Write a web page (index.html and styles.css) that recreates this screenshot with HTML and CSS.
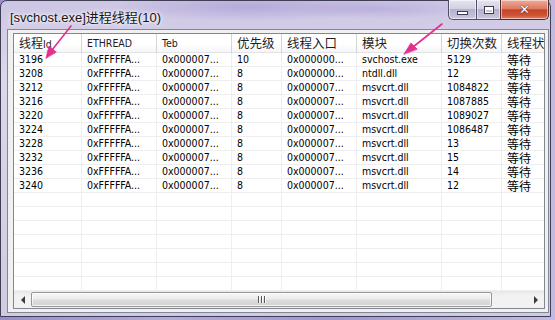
FILE: index.html
```html
<!DOCTYPE html>
<html lang="zh-CN">
<head>
    <meta charset="UTF-8">
    <title>[svchost.exe]进程线程(10)</title>
    <link rel="stylesheet" href="styles.css">
</head>
<body>
    <div class="window">
        <div class="titlebar">
            <div class="title">[svchost.exe]进程线程(10)</div>
            <div class="caption">
                <div class="cbtn min"><span class="glyph-min"></span></div>
                <div class="cbtn max"><span class="glyph-max"></span></div>
                <div class="cbtn close"><span class="glyph-close">✕</span></div>
            </div>
        </div>

        <div class="client">
            <div class="listview">
                <div class="header">
                    <div class="hcell"><span class="zh">线程</span>Id</div>
                    <div class="hcell">ETHREAD</div>
                    <div class="hcell">Teb</div>
                    <div class="hcell zh">优先级</div>
                    <div class="hcell zh">线程入口</div>
                    <div class="hcell zh">模块</div>
                    <div class="hcell zh">切换次数</div>
                    <div class="hcell zh">线程状态</div>
                </div>

                <div class="rows">
                    <div class="row"><span>3196</span><span>0xFFFFFA...</span><span>0x000007...</span><span>10</span><span>0x000000...</span><span>svchost.exe</span><span>5129</span><span class="zh">等待</span></div>
                    <div class="row"><span>3208</span><span>0xFFFFFA...</span><span>0x000007...</span><span>8</span><span>0x000000...</span><span>ntdll.dll</span><span>12</span><span class="zh">等待</span></div>
                    <div class="row"><span>3212</span><span>0xFFFFFA...</span><span>0x000007...</span><span>8</span><span>0x000007...</span><span>msvcrt.dll</span><span>1084822</span><span class="zh">等待</span></div>
                    <div class="row"><span>3216</span><span>0xFFFFFA...</span><span>0x000007...</span><span>8</span><span>0x000007...</span><span>msvcrt.dll</span><span>1087885</span><span class="zh">等待</span></div>
                    <div class="row"><span>3220</span><span>0xFFFFFA...</span><span>0x000007...</span><span>8</span><span>0x000007...</span><span>msvcrt.dll</span><span>1089027</span><span class="zh">等待</span></div>
                    <div class="row"><span>3224</span><span>0xFFFFFA...</span><span>0x000007...</span><span>8</span><span>0x000007...</span><span>msvcrt.dll</span><span>1086487</span><span class="zh">等待</span></div>
                    <div class="row"><span>3228</span><span>0xFFFFFA...</span><span>0x000007...</span><span>8</span><span>0x000007...</span><span>msvcrt.dll</span><span>13</span><span class="zh">等待</span></div>
                    <div class="row"><span>3232</span><span>0xFFFFFA...</span><span>0x000007...</span><span>8</span><span>0x000007...</span><span>msvcrt.dll</span><span>15</span><span class="zh">等待</span></div>
                    <div class="row"><span>3236</span><span>0xFFFFFA...</span><span>0x000007...</span><span>8</span><span>0x000007...</span><span>msvcrt.dll</span><span>14</span><span class="zh">等待</span></div>
                    <div class="row"><span>3240</span><span>0xFFFFFA...</span><span>0x000007...</span><span>8</span><span>0x000007...</span><span>msvcrt.dll</span><span>12</span><span class="zh">等待</span></div>
                    <!-- empty grid rows -->
                    <div class="row"><span></span><span></span><span></span><span></span><span></span><span></span><span></span><span></span></div>
                    <div class="row"><span></span><span></span><span></span><span></span><span></span><span></span><span></span><span></span></div>
                    <div class="row"><span></span><span></span><span></span><span></span><span></span><span></span><span></span><span></span></div>
                    <div class="row"><span></span><span></span><span></span><span></span><span></span><span></span><span></span><span></span></div>
                    <div class="row"><span></span><span></span><span></span><span></span><span></span><span></span><span></span><span></span></div>
                    <div class="row"><span></span><span></span><span></span><span></span><span></span><span></span><span></span><span></span></div>
                    <div class="row"><span></span><span></span><span></span><span></span><span></span><span></span><span></span><span></span></div>
                </div>

                <div class="hscroll">
                    <div class="sb-btn"><span class="arrow-left"></span></div>
                    <div class="sb-thumb"><span class="grip"></span><span class="grip"></span><span class="grip"></span></div>
                    <div class="sb-track"></div>
                    <div class="sb-btn"><span class="arrow-right"></span></div>
                </div>
            </div>
        </div>
    </div>

    <!-- annotation arrows drawn over the screenshot -->
    <svg class="annot" width="555" height="320" viewBox="0 0 555 320">
        <g stroke="#e2308e" stroke-width="1.6" fill="#e2308e" stroke-linecap="round">
            <line x1="71" y1="26" x2="52" y2="50"/>
            <polygon points="46,58 49,46 56,52" stroke-width="0.8"/>
            <line x1="442" y1="24" x2="413" y2="47"/>
            <polygon points="404,54 411,43 417,49" stroke-width="0.8"/>
        </g>
    </svg>
</body>
</html>
```

FILE: styles.css
```css
* {
    box-sizing: border-box;
}

body {
    margin: 0;
    width: 555px;
    height: 320px;
    overflow: hidden;
    position: relative;
    background: linear-gradient(90deg, #9b8dca 0%, #b6a9dc 30%, #a395d0 60%, #c4b9e2 100%);
    font-family: "DejaVu Sans Condensed", "Liberation Sans", "Noto Sans CJK SC", sans-serif;
}

.window {
    width: 551px;
    height: 317px;
    border: 1px solid #3f3f54;
    border-radius: 7px 7px 0 0;
    padding: 0 1px 3px 6px;
    display: flex;
    flex-direction: column;
    background:
        radial-gradient(ellipse 140px 14px at 250px 6px, rgba(150, 135, 205, 0.45), transparent),
        radial-gradient(ellipse 90px 10px at 380px 8px, rgba(160, 145, 210, 0.4), transparent),
        linear-gradient(180deg, #cdc6e4 0%, #dcd8ec 25%, #d6d2e6 60%, #cfcbe0 100%);
}

/* title bar */
.titlebar {
    height: 28px;
    flex: none;
    display: flex;
    justify-content: space-between;
    align-items: flex-start;
}

.title {
    padding: 6px 0 0 3px;
    font-family: "Liberation Sans", "Noto Sans CJK SC", sans-serif;
    font-size: 13px;
    color: #161616;
    text-shadow: 0 0 5px #fff, 0 0 3px #fff;
}

.caption {
    display: flex;
    margin-top: -1px;
}

.cbtn {
    height: 20px;
    border: 1px solid #4e4e66;
    border-top: none;
    display: flex;
    align-items: center;
    justify-content: center;
    background: linear-gradient(180deg, #e6e4f0 0%, #d2d0e2 45%, #b4b1ca 50%, #c2bfd8 85%, #d2d0e2 100%);
    box-shadow: inset 0 0 0 1px rgba(255, 255, 255, 0.5);
}

.min {
    width: 28px;
    border-right: none;
    border-radius: 0 0 0 5px;
}

.max {
    width: 24px;
    border-right: none;
}

.close {
    width: 49px;
    border-radius: 0 0 5px 0;
    border-color: #5a2a2a;
    background: linear-gradient(180deg, #eeaa98 0%, #dd7c62 45%, #c6452b 52%, #cc5234 80%, #e0856a 100%);
}

.glyph-min {
    width: 11px;
    height: 4px;
    margin-top: 7px;
    background: #fff;
    border: 1px solid #3c3c50;
}

.glyph-max {
    width: 10px;
    height: 8px;
    border: 1px solid #3c3c50;
    box-shadow: inset 0 0 0 1px #fff, inset 0 2px 0 1px #fff;
    background: #c8c6d8;
}

.glyph-close {
    color: #fff;
    font-family: "DejaVu Sans", sans-serif;
    font-size: 13px;
    font-weight: bold;
    line-height: 1;
    text-shadow: 0 0 1px #3a1a1a, 0 0 1px #3a1a1a;
}

/* client area */
.client {
    flex: 1;
    border: 1px solid #85859a;
    background: #f0f0f0;
    padding: 3px 3px 3px 5px;
}

.listview {
    height: 100%;
    border: 1px solid #828790;
    background: #fff;
    overflow: hidden;
    display: flex;
    flex-direction: column;
    font-size: 10.5px;
    color: #000;
}

.zh {
    font-family: "Noto Sans CJK SC", sans-serif;
    font-size: 12px;
}

.header,
.row {
    display: grid;
    grid-template-columns: 68px 75px 75px 50px 75px 85px 60px 70px;
    width: 558px;
}

.header {
    height: 19px;
    flex: none;
    background: linear-gradient(180deg, #ffffff 0%, #ffffff 55%, #f4f5f7 100%);
    border-bottom: 1px solid #e2e3e6;
}

.hcell {
    padding-left: 5px;
    border-right: 1px solid #d5d5d5;
    line-height: 18px;
    white-space: nowrap;
    color: #1e1e1e;
}

.hcell.zh {
    font-size: 12.5px;
}

.rows {
    flex: 1;
    overflow: hidden;
}

.row {
    height: 14px;
}

.row span {
    padding-left: 5px;
    border-right: 1px solid #eeeeee;
    border-bottom: 1px solid #eeeeee;
    line-height: 13px;
    white-space: nowrap;
}

/* horizontal scrollbar */
.hscroll {
    height: 17px;
    flex: none;
    display: flex;
    background: linear-gradient(180deg, #e8e8e8 0%, #f2f2f2 30%, #f2f2f2 100%);
}

.sb-btn {
    width: 17px;
    display: flex;
    align-items: center;
    justify-content: center;
}

.arrow-left {
    border-style: solid;
    border-width: 4px 4px 4px 0;
    border-color: transparent #3c3c3c transparent transparent;
}

.arrow-right {
    border-style: solid;
    border-width: 4px 0 4px 4px;
    border-color: transparent transparent transparent #3c3c3c;
}

.sb-thumb {
    width: 461px;
    margin: 1px 0;
    border: 1px solid #969696;
    border-radius: 2px;
    background: linear-gradient(180deg, #f6f6f6 0%, #ececec 45%, #dcdcdc 55%, #d4d4d4 100%);
    box-shadow: inset 0 0 0 1px rgba(255, 255, 255, 0.7);
    display: flex;
    align-items: center;
    justify-content: center;
    gap: 2px;
}

.grip {
    width: 1px;
    height: 7px;
    background: #595959;
    box-shadow: 1px 0 0 #fff;
}

.sb-track {
    flex: 1;
}

.annot {
    position: absolute;
    top: 0;
    left: 0;
    pointer-events: none;
}
```
